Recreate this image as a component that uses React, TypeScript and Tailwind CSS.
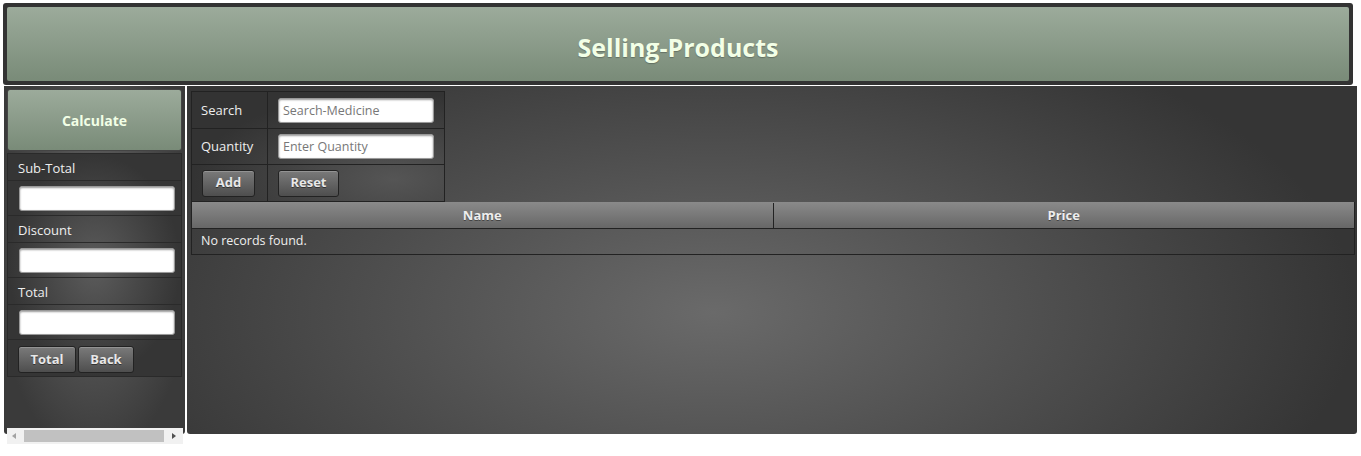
const font = "font-['Open_Sans','Noto_Sans',sans-serif]";

const btn =
  'h-[27px] rounded-[3px] border border-[#222] bg-[linear-gradient(#7a7a7a,#4e4e4e)] text-[13px] font-bold text-[#e8e8e8] [text-shadow:0_1px_0_#333] shadow-[inset_0_1px_0_rgba(255,255,255,0.2)]';

const input =
  'h-[25px] rounded-[3px] border border-[#999] bg-white px-1 text-[12.5px] text-[#333] placeholder:text-[#777] shadow-[inset_0_1px_2px_rgba(0,0,0,0.4)] outline-none';

const Label = ({ text }: { text: string }) => (
  <div className="flex h-[27px] items-center border-b border-[#2a2a2a] px-[10px] pt-[3px] text-[13px] text-[#eee]">
    {text}
  </div>
);

const FieldRow = () => (
  <div className="flex h-[35px] items-center border-b border-[#2a2a2a] px-[11px]">
    <input className={`${input} w-[156px]`} />
  </div>
);

const App = () => {
  return (
    <div className={`${font} h-[456px] w-[1361px] overflow-hidden bg-white`}>
      {/* header */}
      <div className="ml-[3px] mt-[3px] h-[82px] w-[1350px] rounded-[3px] bg-[#333] p-[4px]">
        <div className="flex h-full items-center justify-center rounded-[2px] bg-[linear-gradient(#9cab9b,#798b78)] pt-[7px]">
          <h1 className="text-[25px] font-bold text-[#f2ffe6] [text-shadow:0_1px_1px_rgba(0,0,0,0.25)]">
            Selling-Products
          </h1>
        </div>
      </div>

      <div className="mt-px flex gap-[2px] pl-[4px]">
        {/* west */}
        <div className="relative h-[348px] w-[181px] rounded-b-[3px] bg-[radial-gradient(ellipse_at_50%_45%,#6a6a6a_0%,#3a3a3a_80%)] p-[3px]">
          <div className="flex h-[62px] items-center justify-center rounded-[3px] border border-[#444] bg-[linear-gradient(#9cab9b,#798b78)] text-[14px] font-bold text-[#f2ffe6]">
            Calculate
          </div>
          <div className="mt-[2px] border-x border-t border-[#2a2a2a] bg-[radial-gradient(ellipse_at_center,#5c5c5c_0%,#353535_70%)]">
            <Label text="Sub-Total" />
            <FieldRow />
            <Label text="Discount" />
            <FieldRow />
            <Label text="Total" />
            <FieldRow />
            <div className="flex h-[37px] items-center gap-[2px] border-b border-[#2a2a2a] px-[10px] pt-[3px]">
              <button className={`${btn} w-[58px]`}>Total</button>
              <button className={`${btn} w-[56px]`}>Back</button>
            </div>
          </div>
          {/* scrollbar */}
          <div className="absolute bottom-[-10px] left-[3px] flex h-[16px] w-[176px] items-center bg-[#f1f1f1]">
            <span className="ml-[5px] h-0 w-0 border-y-[3px] border-r-[4px] border-y-transparent border-r-[#a3a3a3]" />
            <div className="ml-[8px] h-[12px] w-[140px] bg-[#c1c1c1]" />
            <span className="ml-[8px] h-0 w-0 border-y-[3px] border-l-[4px] border-y-transparent border-l-[#505050]" />
          </div>
        </div>

        {/* center */}
        <div className="h-[348px] w-[1170px] rounded-b-[3px] bg-[radial-gradient(ellipse_55%_90%_at_45%_65%,#6a6a6a_0%,#353535_100%)] px-[4px] pt-[5px]">
          <div className="w-[254px] border border-[#222] bg-[radial-gradient(ellipse_at_80%_80%,#555_0%,#333_70%)] text-[13px] text-[#eee]">
            <div className="flex h-[37px] border-b border-[#222]">
              <div className="flex w-[76px] items-center border-r border-[#222] px-[9px] pt-px">Search</div>
              <div className="flex items-center px-[10px]">
                <input className={`${input} w-[156px]`} placeholder="Search-Medicine" />
              </div>
            </div>
            <div className="flex h-[36px] border-b border-[#222]">
              <div className="flex w-[76px] items-center border-r border-[#222] px-[9px]">Quantity</div>
              <div className="flex items-center px-[10px]">
                <input className={`${input} w-[156px]`} placeholder="Enter Quantity" />
              </div>
            </div>
            <div className="flex h-[36px]">
              <div className="flex w-[76px] items-center border-r border-[#222] px-[10px]">
                <button className={`${btn} w-[53px]`}>Add</button>
              </div>
              <div className="flex items-center px-[10px]">
                <button className={`${btn} w-[61px]`}>Reset</button>
              </div>
            </div>
          </div>
          <div className="w-[1164px] border-x border-b border-[#222] text-[13px] text-[#eee]">
            <div className="flex h-[27px] border-b border-[#222] bg-[linear-gradient(#8a8a8a,#676767)] pt-px font-bold [text-shadow:0_1px_0_#444]">
              <div className="flex flex-1 items-center justify-center border-r border-[#222]">Name</div>
              <div className="flex flex-1 items-center justify-center">Price</div>
            </div>
            <div className="flex h-[25px] items-center px-[9px] text-[12.5px]">No records found.</div>
          </div>
        </div>
      </div>
    </div>
  );
};

export default App;
